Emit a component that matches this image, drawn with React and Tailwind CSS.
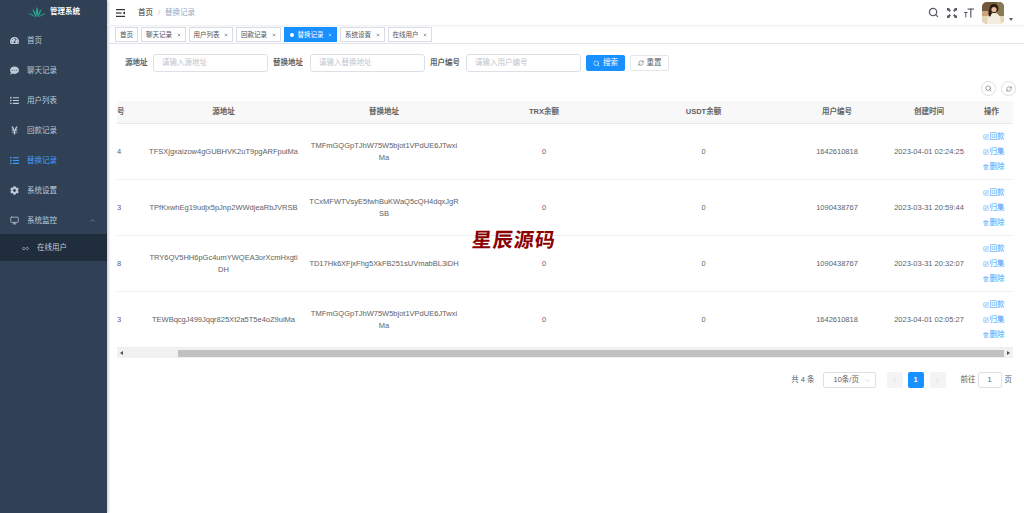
import { ChevronLeft, ChevronRight, ChevronDown, ChevronUp, Infinity as InfinityIcon, Monitor, RefreshCw, Search, SquarePen, Trash2, X } from "lucide-react";
import { FaCog, FaCommentDots, FaListUl, FaTachometerAlt, FaYenSign } from "react-icons/fa";

const font = "font-['Liberation_Sans','Noto_Sans_CJK_SC',sans-serif]";

const menu = [
  { label: "首页", Icon: FaTachometerAlt },
  { label: "聊天记录", Icon: FaCommentDots },
  { label: "用户列表", Icon: FaListUl },
  { label: "回款记录", Icon: FaYenSign },
  { label: "替换记录", Icon: FaListUl, active: true },
  { label: "系统设置", Icon: FaCog },
  { label: "系统监控", Icon: Monitor, open: true },
];

const tags = ["首页", "聊天记录", "用户列表", "回款记录", "替换记录", "系统设置", "在线用户"];

const columns = "grid-cols-[26px_161px_160px_160px_159px_108px_76px_46px]";

const rows = [
  {
    id: "4",
    source: ["TFSXjgxaizow4gGUBHVK2uT9pgARFpuiMa"],
    target: ["TMFmGQGpTJhW75W5bjot1VPdUE6JTwxi", "Ma"],
    user: "1642610818",
    time: "2023-04-01 02:24:25",
  },
  {
    id: "3",
    source: ["TPfKxwhEg19udjx5pJnp2WWdjeaRbJVRSB"],
    target: ["TCxMFWTVsyE5fwhBuKWaQ5cQH4dqxJgR", "SB"],
    user: "1090438767",
    time: "2023-03-31 20:59:44",
  },
  {
    id: "8",
    source: ["TRY6QV5HH6pGc4umYWQEA3orXcmHxgti", "DH"],
    target: ["TD17Hk6XFjxFhg5XkFB251sUVmabBL3iDH"],
    user: "1090438767",
    time: "2023-03-31 20:32:07",
  },
  {
    id: "3",
    source: ["TEWBqcgJ499Jqqr825Xt2a5T5e4oZ9uiMa"],
    target: ["TMFmGQGpTJhW75W5bjot1VPdUE6JTwxi", "Ma"],
    user: "1642610818",
    time: "2023-04-01 02:05:27",
  },
];

const Logo = () => (
  <svg width="18" height="12" viewBox="0 0 36 24" fill="#2aa58c">
    <path d="M18 22 C15 15 15 8 18 1 C21 8 21 15 18 22Z" />
    <path d="M16 22 C12 17 10 11 9 5 C13 9 16 15 17 22Z" />
    <path d="M20 22 C24 17 26 11 27 5 C23 9 20 15 19 22Z" />
    <path d="M15 23 C10 20 5 17 0 15 C6 14 12 18 15 23Z" />
    <path d="M21 23 C26 20 31 17 36 15 C30 14 24 18 21 23Z" />
  </svg>
);

const Avatar = () => (
  <svg width="22" height="22" viewBox="0 0 22 22" className="rounded-[5px]">
    <rect width="22" height="22" fill="#c9a57c" />
    <rect width="22" height="9" fill="#6f5a3c" />
    <rect x="15" y="0" width="7" height="14" fill="#8a7a52" />
    <rect y="14" width="22" height="8" fill="#e6d5b8" />
    <path d="M5 22 C5 14 8 11 12 11 C17 11 19 15 19 22Z" fill="#f3ede0" />
    <circle cx="12" cy="6.5" r="4.5" fill="#2f1d14" />
    <circle cx="12" cy="7.5" r="2.6" fill="#e4bfa0" />
    <path d="M7 7 C6 11 6 13 8 15 L10 11Z" fill="#2f1d14" />
  </svg>
);

const MenuToggle = () => (
  <svg width="9" height="8" viewBox="0 0 9 8" className="text-[#303133]">
    <rect width="9" height="1.2" fill="currentColor" />
    <rect y="3.4" width="5.5" height="1.2" fill="currentColor" />
    <rect y="6.8" width="9" height="1.2" fill="currentColor" />
    <path d="M9 2.4 L6.6 4 L9 5.6Z" fill="currentColor" />
  </svg>
);

const FullscreenIcon = () => (
  <svg width="10" height="10" viewBox="0 0 10 10" fill="#5a5e66">
    <path d="M0 0h3L2.2 .8 4 2.6 2.6 4 .8 2.2 0 3Z" />
    <path d="M10 0H7l.8.8L6 2.6 7.4 4l1.8-1.8L10 3Z" />
    <path d="M0 10h3l-.8-.8L4 7.4 2.6 6 .8 7.8 0 7Z" />
    <path d="M10 10H7l.8-.8L6 7.4 7.4 6l1.8 1.8L10 7Z" />
  </svg>
);

const FontSizeIcon = () => (
  <svg width="10" height="10" viewBox="0 0 10 10" fill="#5a5e66">
    <rect x="3.6" y="0.5" width="6.4" height="1.2" />
    <rect x="6.2" y="0.5" width="1.2" height="9" />
    <rect x="0" y="4" width="3.6" height="1" />
    <rect x="1.3" y="4" width="1" height="5.5" />
  </svg>
);

const Field = ({ label, placeholder, labelWidth }) => (
  <div className="flex items-center">
    <span className={`${labelWidth} text-[7.5px] font-bold text-[#606266]`}>{label}</span>
    <div className="flex h-[18px] w-[115px] items-center rounded-[3px] border border-[#dcdfe6] bg-white pl-[8px] text-[7.5px] text-[#c0c4cc]">
      {placeholder}
    </div>
  </div>
);

const Actions = () => (
  <div className="flex flex-col items-center gap-[3px] pl-[7px] text-[7.5px] leading-3 text-[#409eff]">
    <span className="flex items-center gap-[1px]"><SquarePen size={6} />回款</span>
    <span className="flex items-center gap-[1px]"><SquarePen size={6} />归集</span>
    <span className="flex items-center gap-[1px]"><Trash2 size={6} />删除</span>
  </div>
);

export default function App() {
  return (
    <div className={`${font} relative flex h-[513px] w-[1024px] overflow-hidden bg-white`}>
      <aside className="flex w-[107px] shrink-0 flex-col bg-[#304156] shadow-[1px_0_3px_rgba(0,0,0,0.25)]">
        <div className="flex h-[24px] items-center pl-[28px]">
          <Logo />
          <span className="ml-[4px] text-[7.5px] font-bold text-white">管理系统</span>
        </div>
        <nav className="flex flex-col">
          {menu.map(({ label, Icon, active, open }) => (
            <div
              key={label}
              className={`flex h-[30px] items-center pl-[10px] pr-[11px] pt-[3px] text-[7.5px] ${active ? "text-[#409eff]" : "text-[#bfcbd9]"}`}
            >
              <Icon size={9} />
              <span className="ml-[8px] flex-1">{label}</span>
              {open && <ChevronUp size={7} className="text-[#8a97a6]" />}
            </div>
          ))}
          <div className="flex h-[27px] items-center bg-[#1f2d3d] pl-[22px] pt-[1px] text-[7.5px] text-[#bfcbd9]">
            <InfinityIcon size={7} />
            <span className="ml-[8px]">在线用户</span>
          </div>
        </nav>
      </aside>

      <main className="flex min-w-0 flex-1 flex-col">
        <header className="flex h-[26px] shrink-0 items-center border-b border-[#f0f2f5] pl-[9px] pr-[11px] shadow-[0_1px_2px_rgba(0,21,41,0.04)]">
          <MenuToggle />
          <span className="ml-[13px] text-[7.5px] text-[#303133]">首页</span>
          <span className="mx-[5px] text-[7.5px] text-[#c0c4cc]">/</span>
          <span className="text-[7.5px] text-[#97a8be]">替换记录</span>
          <div className="ml-auto flex items-center">
            <Search size={11} strokeWidth={2.75} className="text-[#5a5e66]" />
            <span className="ml-[8px]"><FullscreenIcon /></span>
            <span className="ml-[7px]"><FontSizeIcon /></span>
            <div className="ml-[8px]"><Avatar /></div>
            <span className="ml-[5px] mt-[14px] h-0 w-0 border-x-[2px] border-t-[3px] border-x-transparent border-t-[#5a5e66]" />
          </div>
        </header>

        <div className="box-content flex h-[17px] shrink-0 items-center gap-[3px] border-b border-[#dfe2e8] pl-[8px]">
          {tags.map((tag, i) => {
            const active = tag === "替换记录";
            return (
              <div
                key={tag}
                className={`flex h-[15px] items-center border pl-[4px] pr-[4px] text-[6.5px] ${active ? "border-[#1890ff] bg-[#1890ff] pl-[5px] text-white" : "border-[#d8dce5] bg-white text-[#495060]"}`}
              >
                {active && <span className="mr-[4px] h-[4px] w-[4px] rounded-full bg-white" />}
                {tag}
                {i > 0 && <X size={4} strokeWidth={3} className="ml-[4.5px]" />}
              </div>
            );
          })}
        </div>

        <section className="flex flex-1 flex-col pl-[10px] pr-[11px]">
          <form className="mt-[9px] flex h-[20px] items-center pl-[8px]">
            <Field label="源地址" placeholder="请输入源地址" labelWidth="w-[28px]" />
            <div className="ml-[5px]">
              <Field label="替换地址" placeholder="请输入替换地址" labelWidth="w-[37px]" />
            </div>
            <div className="ml-[5px]">
              <Field label="用户编号" placeholder="请输入用户编号" labelWidth="w-[36px]" />
            </div>
            <div className="ml-[5px] flex h-[16px] w-[39px] items-center justify-center gap-[3px] rounded-[2px] bg-[#1890ff] text-[7.5px] text-white">
              <Search size={7} />搜索
            </div>
            <div className="ml-[5px] flex h-[16px] w-[39px] items-center justify-center gap-[3px] rounded-[2px] border border-[#e4e7ed] text-[7.5px] text-[#606266]">
              <RefreshCw size={6} />重置
            </div>
          </form>

          <div className="mt-[8px] flex h-[16px] translate-x-[3px] justify-end gap-[5px]">
            <span className="flex h-[15px] w-[15px] items-center justify-center rounded-full border border-[#dcdfe6] text-[#606266]"><Search size={7} /></span>
            <span className="flex h-[15px] w-[15px] items-center justify-center rounded-full border border-[#dcdfe6] text-[#606266]"><RefreshCw size={6} /></span>
          </div>

          <div className="mt-[4px]">
            <div className={`grid h-[23px] ${columns} items-center border-b border-[#e8eaee] bg-[#f8f8f9] text-center text-[7.5px] font-bold text-[#606266]`}>
              <span className="text-left">号</span>
              <span>源地址</span>
              <span>替换地址</span>
              <span>TRX余额</span>
              <span>USDT余额</span>
              <span>用户编号</span>
              <span>创建时间</span>
              <span className="pl-[3px]">操作</span>
            </div>
            {rows.map((row) => (
              <div key={row.time} className={`grid h-[56px] ${columns} items-center border-b border-[#ebeef5] text-center text-[7.5px] leading-3 text-[#606266]`}>
                <span className="text-left">{row.id}</span>
                <span>{row.source.map((line) => <span key={line} className="block whitespace-nowrap">{line}</span>)}</span>
                <span>{row.target.map((line) => <span key={line} className="block whitespace-nowrap">{line}</span>)}</span>
                <span>0</span>
                <span>0</span>
                <span>{row.user}</span>
                <span className="whitespace-nowrap">{row.time}</span>
                <Actions />
              </div>
            ))}
            <div className="flex h-[10px] items-center bg-[#f1f1f1]">
              <span className="ml-[3px] h-0 w-0 border-y-[2px] border-r-[3px] border-y-transparent border-r-[#505050]" />
              <span className="ml-[55px] h-[7px] w-[826px] bg-[#c1c1c1]" />
              <span className="ml-auto mr-[3px] h-0 w-0 border-y-[2px] border-l-[3px] border-y-transparent border-l-[#505050]" />
            </div>
          </div>

          <div className="mt-[14px] flex h-[16px] items-center justify-end pr-[1px] text-[7.5px] text-[#606266]">
            <span>共 4 条</span>
            <div className="ml-[8px] flex h-[16px] w-[53px] items-center justify-between rounded-[2px] border border-[#dcdfe6] pl-[10px] pr-[4px]">
              10条/页<ChevronDown size={7} className="text-[#c0c4cc]" />
            </div>
            <span className="ml-[11px] flex h-[16px] w-[16px] items-center justify-center rounded-[2px] bg-[#f4f4f5] text-[#c0c4cc]"><ChevronLeft size={7} /></span>
            <span className="ml-[5px] flex h-[16px] w-[16px] items-center justify-center rounded-[2px] bg-[#1890ff] font-bold text-white">1</span>
            <span className="ml-[6px] flex h-[16px] w-[16px] items-center justify-center rounded-[2px] bg-[#f4f4f5] text-[#c0c4cc]"><ChevronRight size={7} /></span>
            <span className="ml-[15px]">前往</span>
            <span className="ml-[2px] flex h-[16px] w-[24px] items-center justify-center rounded-[2px] border border-[#dcdfe6]">1</span>
            <span className="ml-[3px]">页</span>
          </div>
        </section>
      </main>

      <span className="pointer-events-none absolute left-[472px] top-[227px] -skew-x-6 text-[20px] font-bold leading-[26px] tracking-[1px] text-[#8b0000]">星辰源码</span>
    </div>
  );
}
